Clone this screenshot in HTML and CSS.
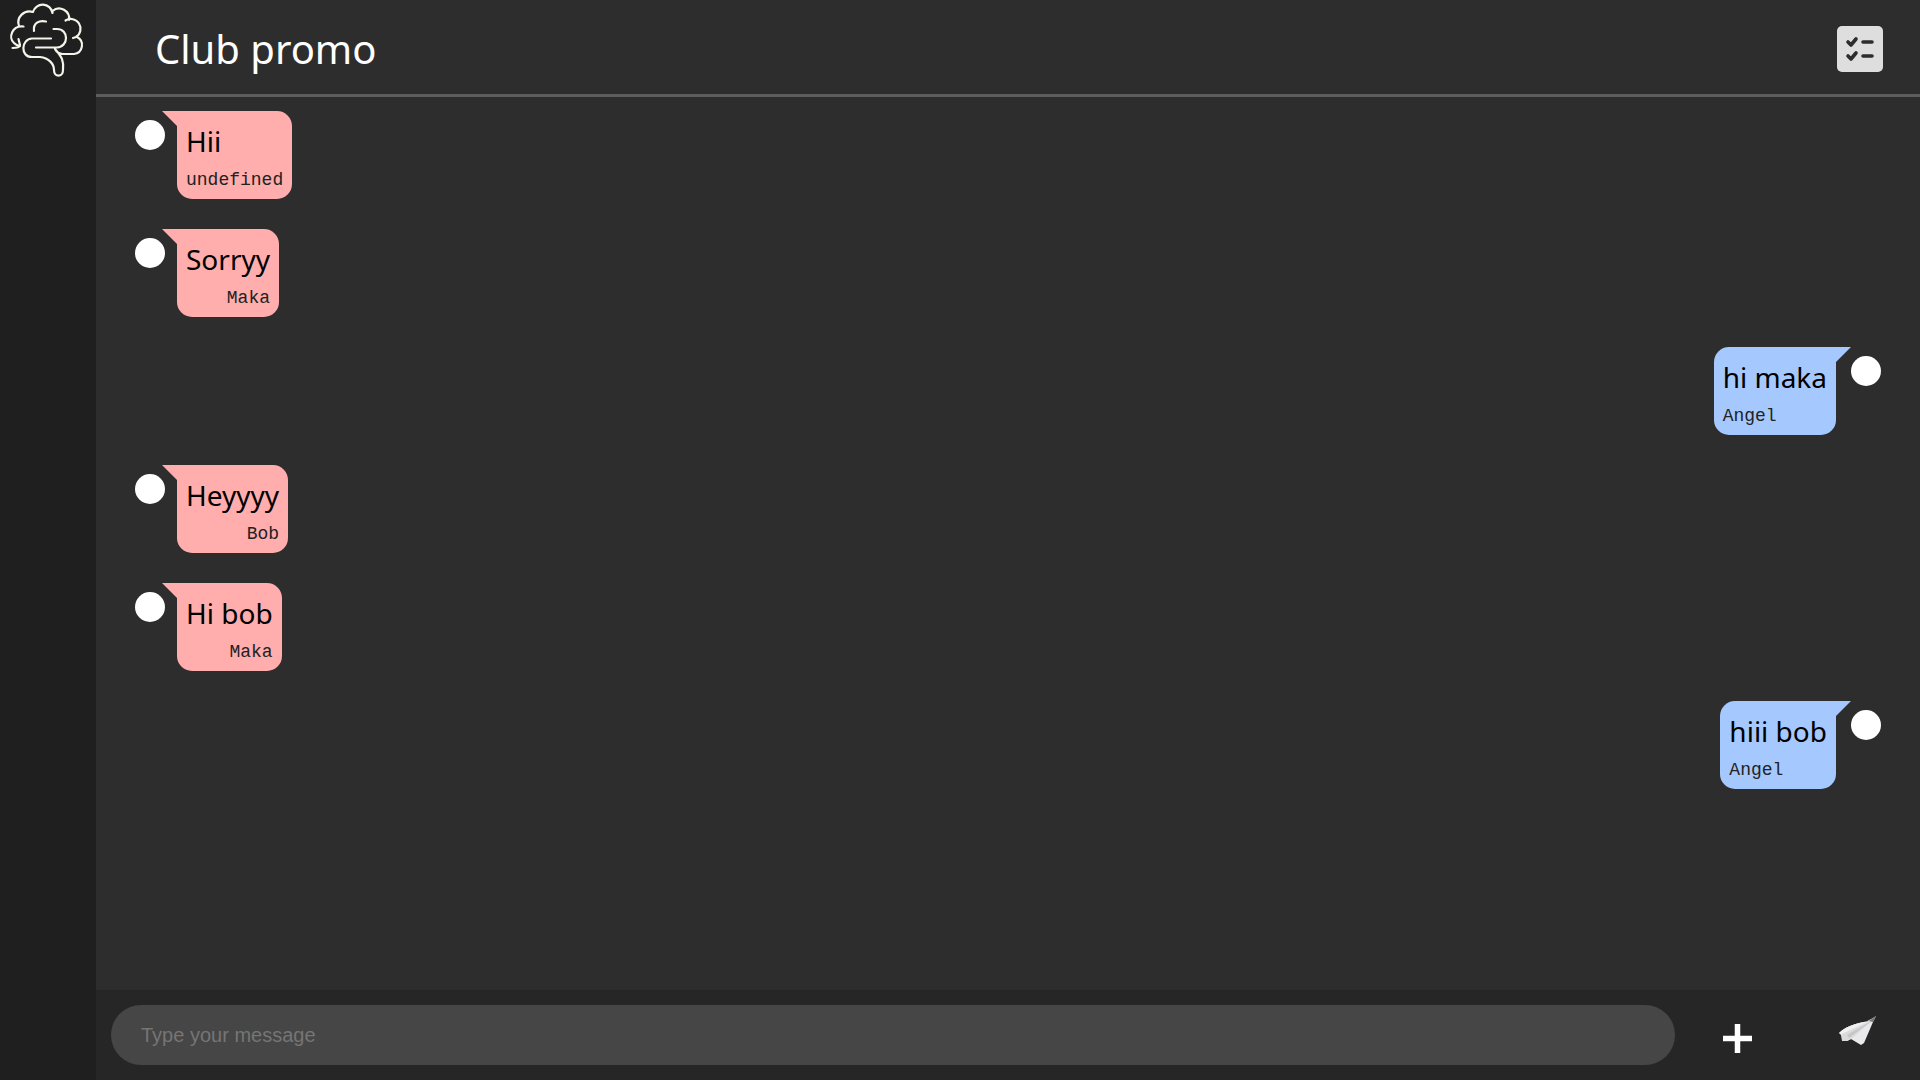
FILE: index.html
```html
<!DOCTYPE html>
<html lang="en">
<head>
<meta charset="utf-8">
<title>Club promo</title>
<link rel="stylesheet" href="styles.css">
</head>
<body>
<div class="app">
  <nav class="sidebar" aria-label="Main">
    <a class="brand" href="#" aria-label="Home">
      <svg class="brand-icon" viewBox="0 0 96 80" fill="none" stroke="#f4f4ea" stroke-width="2.2" stroke-linecap="round" stroke-linejoin="round">
        <path d="M23.500 26.500C12 25 8 38 14 43C16 45 18 46 20 46M12.500 48C17 48 20 47 20 45L18.500 39M19 26A11 11 0 0 1 33 12A10 10 0 0 1 52.500 13V11A10 10 0 0 1 69 20M65.500 20.500A9.500 9.500 0 0 1 76 37L73 38M77 37A9 9 0 0 1 74 54H62"/>
        <path d="M34 31C33 23 39 20 46 21.500M53.500 29H57C69 29 69 46.500 57 47.500H36M51 38.500H32C21 39 20 57 32 57H40C49 58 54 64 54 70C54 77.500 63 77.500 63 70C64 61 62 57 55 49M55 49C57 53 60 54 63 54"/>
      </svg>
    </a>
  </nav>
  <main class="chat">
    <header class="chat-header">
      <h1 class="chat-title">Club promo</h1>
      <button class="icon-button" type="button" aria-label="Tasks">
        <svg class="tasks-icon" viewBox="0 0 46 46">
          <rect width="46" height="46" rx="5" fill="#dedede"/>
          <path d="M11 16L14 19L19 13M11 30L14 33L19 27M26 16H35M26 30H35" fill="none" stroke="#2d2d2d" stroke-width="3.6" stroke-linecap="round" stroke-linejoin="round"/>
        </svg>
      </button>
    </header>
    <ul class="messages">
      <li class="message"><span class="avatar"></span><div class="bubble"><p class="text">Hii</p><p class="author">undefined</p></div></li>
      <li class="message"><span class="avatar"></span><div class="bubble"><p class="text">Sorryy</p><p class="author">Maka</p></div></li>
      <li class="message own"><span class="avatar"></span><div class="bubble"><p class="text">hi maka</p><p class="author">Angel</p></div></li>
      <li class="message"><span class="avatar"></span><div class="bubble"><p class="text">Heyyyy</p><p class="author">Bob</p></div></li>
      <li class="message"><span class="avatar"></span><div class="bubble"><p class="text">Hi bob</p><p class="author">Maka</p></div></li>
      <li class="message own"><span class="avatar"></span><div class="bubble"><p class="text">hiii bob</p><p class="author">Angel</p></div></li>
    </ul>
    <form class="composer">
      <input class="composer-input" type="text" placeholder="Type your message" aria-label="Message">
      <div class="composer-actions">
        <button class="icon-button" type="button" aria-label="Add attachment">
          <svg class="action-icon" viewBox="0 0 48 48"><path d="M10 27.500H39M24.500 13V42" stroke="#fff" stroke-width="5.500"/></svg>
        </button>
        <button class="icon-button" type="submit" aria-label="Send">
          <svg class="action-icon" viewBox="0 0 48 48">
            <g transform="translate(-1 3)">
              <path d="M4 19C12 11 24 9 34 7L41 2L38 8L29 29L26 31L16 25L12 27L7 27L6 21Z" fill="#e9e8eb"/>
              <path d="M4 19C12 11 24 9 34 7L40 3L7 20Z" fill="#f0f0f0"/>
              <path d="M7 20L38 6L16 25L12 27L7 27Z" fill="#dadada"/>
              <path d="M14 24L38 6L12 21Z" fill="#c6c6c6"/>
              <path d="M34 7L41 2L38 8Z" fill="#777"/>
            </g>
          </svg>
        </button>
      </div>
    </form>
  </main>
</div>
</body>
</html>
```
FILE: styles.css
```css
* { box-sizing: border-box; }
body { margin: 0; background: #2d2d2d; font-family: "Segoe UI", "Noto Sans", sans-serif; }
.app { display: flex; min-height: 100vh; }
.sidebar { flex: 0 0 96px; background: #1f1f1f; }
.brand, .brand-icon { display: block; }
.brand-icon { width: 100%; }
.chat { flex: 1; display: flex; flex-direction: column; min-width: 0; }
.chat-header { display: flex; align-items: center; justify-content: space-between; height: 97px; padding: 4px 37px 0 59px; border-bottom: 3px solid #5d5d5d; }
.chat-title { margin: 0; color: #fff; font-size: 40px; font-weight: 400; line-height: 52px; }
.icon-button { padding: 0; border: 0; background: none; cursor: pointer; }
.icon-button svg { display: block; }
.tasks-icon { width: 46px; height: 46px; }
.messages { flex: 1; display: flex; flex-direction: column; gap: 30px; margin: 0; padding: 14px 39px; list-style: none; }
.message { display: flex; align-items: flex-start; gap: 12px; }
.own { flex-direction: row-reverse; gap: 15px; }
.avatar { width: 30px; height: 30px; margin-top: 9px; border-radius: 50%; background: #fff; }
.bubble { position: relative; padding: 9px; border-radius: 0 15px 15px 15px; background: #ffadad; color: #000; }
.bubble::before { content: ""; position: absolute; top: 0; right: 100%; width: 15px; height: 15px; background: inherit; clip-path: polygon(0 0, 100% 0, 100% 100%); }
.own .bubble { border-radius: 15px 0 15px 15px; background: #a5c8ff; }
.own .bubble::before { right: auto; left: 100%; clip-path: polygon(0 0, 100% 0, 0 100%); }
.text { margin: 0; font-size: 28px; line-height: 42px; }
.author { margin: 8px 0 0; color: #222; font-family: "Liberation Mono", monospace; font-size: 18px; line-height: 20px; text-align: right; }
.own .author { text-align: left; }
.composer { display: flex; align-items: center; gap: 38px; padding: 15px 36px 15px 15px; background: #262626; }
.composer-input { flex: 1; min-width: 0; height: 60px; padding: 0 30px; border: 0; border-radius: 30px; background: #464646; color: #fff; font-family: "Liberation Sans", sans-serif; font-size: 20px; }
.composer-input::placeholder { color: #757575; }
.composer-actions { display: flex; gap: 75px; }
.action-icon { width: 48px; height: 48px; }
```
